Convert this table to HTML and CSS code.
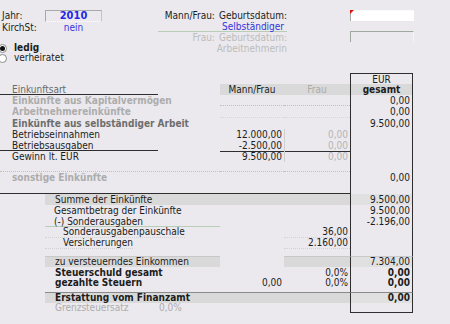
FILE: index.html
```html
<!DOCTYPE html>
<html lang="de">
<head>
<meta charset="utf-8">
<title>Einkommensteuer</title>
<link rel="stylesheet" href="styles.css">
</head>
<body>
<div class="top">
  <div class="left">
    <div class="frow"><span class="lab">Jahr:</span><span class="yearbox">2010</span></div>
    <div class="frow"><span class="lab">KirchSt:</span><span class="kval">nein</span></div>
    <div class="radios">
      <div class="radio"><span class="rb on"></span><b>ledig</b></div>
      <div class="radio"><span class="rb"></span>verheiratet</div>
    </div>
  </div>
  <div class="mid">
    <div class="mrow"><span class="mlab">Mann/Frau:</span><span>Geburtsdatum:</span></div>
    <div class="mrow sep"><span class="mlab"></span><span class="blue">Selbständiger</span></div>
    <div class="mrow gray"><span class="mlab">Frau:</span><span>Geburtsdatum:</span></div>
    <div class="mrow gray"><span class="mlab"></span><span>Arbeitnehmerin</span></div>
  </div>
  <div class="right">
    <div class="inp1"><span class="tri"></span></div>
    <div class="inp2"></div>
  </div>
</div>

<div class="table">
  <div class="row"><div class="l"></div><div class="m"></div><div class="f"></div><div class="g first c">EUR</div></div>
  <div class="row"><div class="l"><span class="ul head">Einkunftsart</span></div><div class="m band c">Mann/Frau</div><div class="f band c lg">Frau</div><div class="g band c b">gesamt</div></div>
  <div class="row"><div class="l lt b">Einkünfte aus Kapitalvermögen</div><div class="m dot"></div><div class="f dot"></div><div class="g">0,00</div></div>
  <div class="row h12"><div class="l lt b">Arbeitnehmereinkünfte</div><div class="m dot2"></div><div class="f dot2"></div><div class="g">0,00</div></div>
  <div class="row"><div class="l mg b">Einkünfte aus selbständiger Arbeit</div><div class="m"></div><div class="f"></div><div class="g">9.500,00</div></div>
  <div class="row"><div class="l">Betriebseinnahmen</div><div class="m">12.000,00</div><div class="f fv">0,00</div><div class="g"></div></div>
  <div class="row"><div class="l"><span class="ul">Betriebsausgaben</span></div><div class="m lineb">-2.500,00</div><div class="f fv lineb">0,00</div><div class="g"></div></div>
  <div class="row"><div class="l">Gewinn lt. EUR</div><div class="m">9.500,00</div><div class="f fv">0,00</div><div class="g"></div></div>
  <div class="row h10"><div class="l dot"></div><div class="m dot"></div><div class="f dot"></div><div class="g"></div></div>
  <div class="row"><div class="l lt b">sonstige Einkünfte</div><div class="m"></div><div class="f"></div><div class="g">0,00</div></div>
  <div class="row"><div class="l lineb"></div><div class="m lineb"></div><div class="f lineb"></div><div class="g"></div></div>

  <div class="row"><div class="l sub"><span class="bandl s1">Summe der Einkünfte</span></div><div class="m band"></div><div class="f band"></div><div class="g band2">9.500,00</div></div>
  <div class="row"><div class="l sub"><span class="s2">Gesamtbetrag der Einkünfte</span></div><div class="m"></div><div class="f"></div><div class="g">9.500,00</div></div>
  <div class="row"><div class="l sub"><span class="s2 gl">(-) Sonderausgaben</span></div><div class="m"></div><div class="f"></div><div class="g">-2.196,00</div></div>
  <div class="row h10"><div class="l sub"><span class="s3 ld">Sonderausgabenpauschale</span></div><div class="m"></div><div class="f ld">36,00</div><div class="g"></div></div>
  <div class="row"><div class="l sub"><span class="s3 ld">Versicherungen</span></div><div class="m"></div><div class="f ld">2.160,00</div><div class="g"></div></div>
  <div class="row h8"><div class="l"></div><div class="m"></div><div class="f"></div><div class="g"></div></div>
  <div class="row lh10"><div class="l sub"><span class="bandl topl s1">zu versteuerndes Einkommen</span></div><div class="m"></div><div class="f band topl"></div><div class="g band2 topl">7.304,00</div></div>
  <div class="row"><div class="l sub b"><span class="s1">Steuerschuld gesamt</span></div><div class="m"></div><div class="f">0,0%</div><div class="g b">0,00</div></div>
  <div class="row h10"><div class="l sub b"><span class="s1">gezahlte Steuern</span></div><div class="m">0,00</div><div class="f">0,0%</div><div class="g b">0,00</div></div>
  <div class="row h4"><div class="l"></div><div class="m"></div><div class="f"></div><div class="g"></div></div>
  <div class="row lh10"><div class="l sub b"><span class="bandl topg s1">Erstattung vom Finanzamt</span></div><div class="m band topg"></div><div class="f band topg"></div><div class="g b band2 topg">0,00</div></div>
  <div class="row h10"><div class="l sub lt"><span class="s1 grenz">Grenzsteuersatz</span><span>0,0%</span></div><div class="m"></div><div class="f"></div><div class="g last"></div></div>
</div>
</body>
</html>
```

FILE: styles.css
```css
* { box-sizing: border-box; }
html, body { margin: 0; padding: 0; }
body {
  width: 450px;
  height: 324px;
  overflow: hidden;
  background: #ebe9ed;
  font-family: "DejaVu Sans Condensed", "DejaVu Sans", sans-serif;
  font-stretch: condensed;
  font-size: 10px;
  color: #1c1c1c;
}
b, .b { font-weight: bold; }

/* ---------- top area ---------- */
.top { display: flex; height: 73px; }
.left { width: 158px; padding: 10px 0 0 2px; }
.frow { display: flex; height: 11px; line-height: 11px; }
.frow:first-child { height: 12px; line-height: 12px; }
.lab { width: 43px; }
.yearbox {
  width: 57px; height: 12px; line-height: 10px;
  border: 1px solid #a9a9a9; border-bottom: 1px dotted #ffffff; border-right-color: #c4c4c4;
  text-align: center; font-weight: bold; color: #2626e6; font-size: 11px;
}
.kval { width: 57px; text-align: center; color: #3434e0; }
.radios { margin: 10px 0 0 -3px; }
.radio { display: flex; align-items: center; height: 10px; line-height: 10px; }
.rb {
  width: 9px; height: 9px; border-radius: 50%;
  background: #fff; border: 1px solid #8a8a8a; margin: 0 7px 0 -1px;
  display: flex; align-items: center; justify-content: center;
}
.rb.on::after { content: ""; width: 5px; height: 5px; border-radius: 50%; background: #111; }

.mid { width: 192px; padding-top: 10px; }
.mrow { display: flex; width: 129px; height: 11px; line-height: 11px; white-space: nowrap; }
.mlab { width: 60px; text-align: right; margin-right: 4px; }
.mrow.sep { border-bottom: 1px solid #b7cdb5; }
.mrow.gray { color: #bcbcbc; }
.blue { color: #3232dc; }

.right { width: 64px; padding-top: 10px; }
.inp1 { height: 11px; background: #fff; border-left: 1px solid #a0a8a0; border-top: 1px dotted #f4f4f4; position: relative; }
.tri { position: absolute; left: -1px; top: -1px; width: 0; height: 0; border-top: 4px solid #e01010; border-right: 4px solid transparent; }
.inp2 { margin-top: 10px; height: 11px; border-left: 1px solid #a0a8a0; border-top: 1px solid #a0a8a0; border-right: 1px dotted #fff; }

/* ---------- table ---------- */
.row { display: grid; grid-template-columns: 220px 64px 66px 63px; height: 11px; line-height: 11px; white-space: nowrap; }
.row.h12 { height: 12px; }
.row.h10 { height: 10px; line-height: 10px; }
.row.lh10 { line-height: 10px; }
.row.h8 { height: 8px; }
.row.h4 { height: 4px; }
.l { padding-left: 12px; }
.l.sub { padding-left: 45px; display: flex; }
.m, .f, .g { text-align: right; padding-right: 2px; }
.g { border-left: 1px solid #2e2e2e; border-right: 1px solid #2e2e2e; }
.g.first { border-top: 1px solid #2e2e2e; }
.g.last { border-bottom: 1px solid #2e2e2e; }
.c { text-align: center; padding-right: 0; }
.band { background: #d9d9d9; }
.band2 { background: #e0e0e0; }
.lt { color: #adadad; }
.mg { color: #6e6e6e; }
.lg { color: #ababab; }
.head { color: #6a6a6a; }
.ul { display: block; width: 158px; margin-left: -12px; padding-left: 12px; height: 11px; border-bottom: 1px solid #2e2e2e; }
.dot { border-bottom: 1px dotted #b6cca4; }
.dot2 { border-bottom: 1px dotted #d6d6d6; }
.lineb { border-bottom: 1px solid #2e2e2e; }
.fv { color: #b5b5b5; border-left: 1px solid #cfcfcf; }
.bandl { display: block; width: 175px; background: #d9d9d9; }
.s1 { padding-left: 10px; }
.s2 { padding-left: 9px; }
.s3 { padding-left: 18px; }
.gl { display: block; width: 177px; border-bottom: 1px solid #b7cdb5; height: 11px; }
.ld { border-bottom: 1px dotted #d2d2d2; }
.topl { border-top: 1px solid #c8c8c8; }
.topg { border-top: 1px solid #8a8a8a; }
.grenz { width: 114px; }
```
